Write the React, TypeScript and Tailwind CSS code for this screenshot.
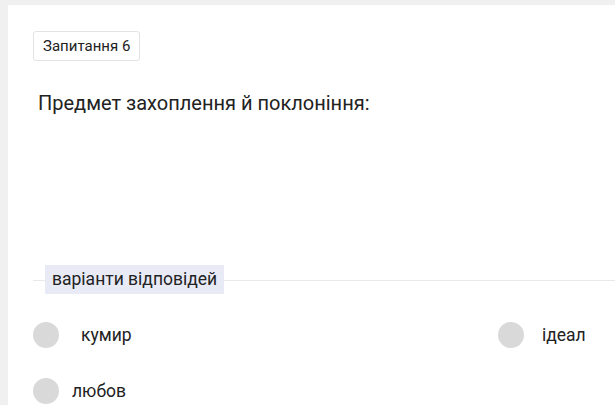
export default function App() {
  const options = [
    { label: 'кумир', gap: 'ml-[22px]' },
    { label: 'ідеал', gap: 'ml-[18px]' },
    { label: 'любов', gap: 'ml-[13px]' },
  ]

  return (
    <div className="min-h-[405px] w-[615px] overflow-hidden bg-[#f0f0f0] pl-[8px] pt-[5px] font-['Roboto',sans-serif] text-[#212121]">
      <div className="min-h-[400px] bg-white pl-[25px] pt-[26px]">
        <span className="inline-block rounded-[3px] border border-[#e3e3e3] px-[9px] py-[5px] text-[15px] leading-[18px] text-[#222]">
          Запитання 6
        </span>

        <p className="mt-[28px] pl-[5px] text-[20px] leading-[28px] text-[#222]">
          Предмет захоплення й поклоніння:
        </p>

        <div className="relative mt-[148px] flex h-[29px] items-center">
          <div className="absolute left-0 right-0 top-[15px] h-px bg-[#e8e8e8]" />
          <span className="relative ml-[12px] bg-[#e8eaf6] px-[7px] text-[17.5px] leading-[29px] text-[#222]">
            варіанти відповідей
          </span>
        </div>

        <div className="mt-[28px] grid grid-cols-[465px_1fr] gap-y-[30px]">
          {options.map((o) => (
            <div key={o.label} className="flex h-[26px] items-center">
              <span className="h-[26px] w-[26px] rounded-full bg-[#d9d9d9]" />
              <span className={`${o.gap} text-[17.5px] leading-[26px] text-[#222]`}>{o.label}</span>
            </div>
          ))}
        </div>
      </div>
    </div>
  )
}
